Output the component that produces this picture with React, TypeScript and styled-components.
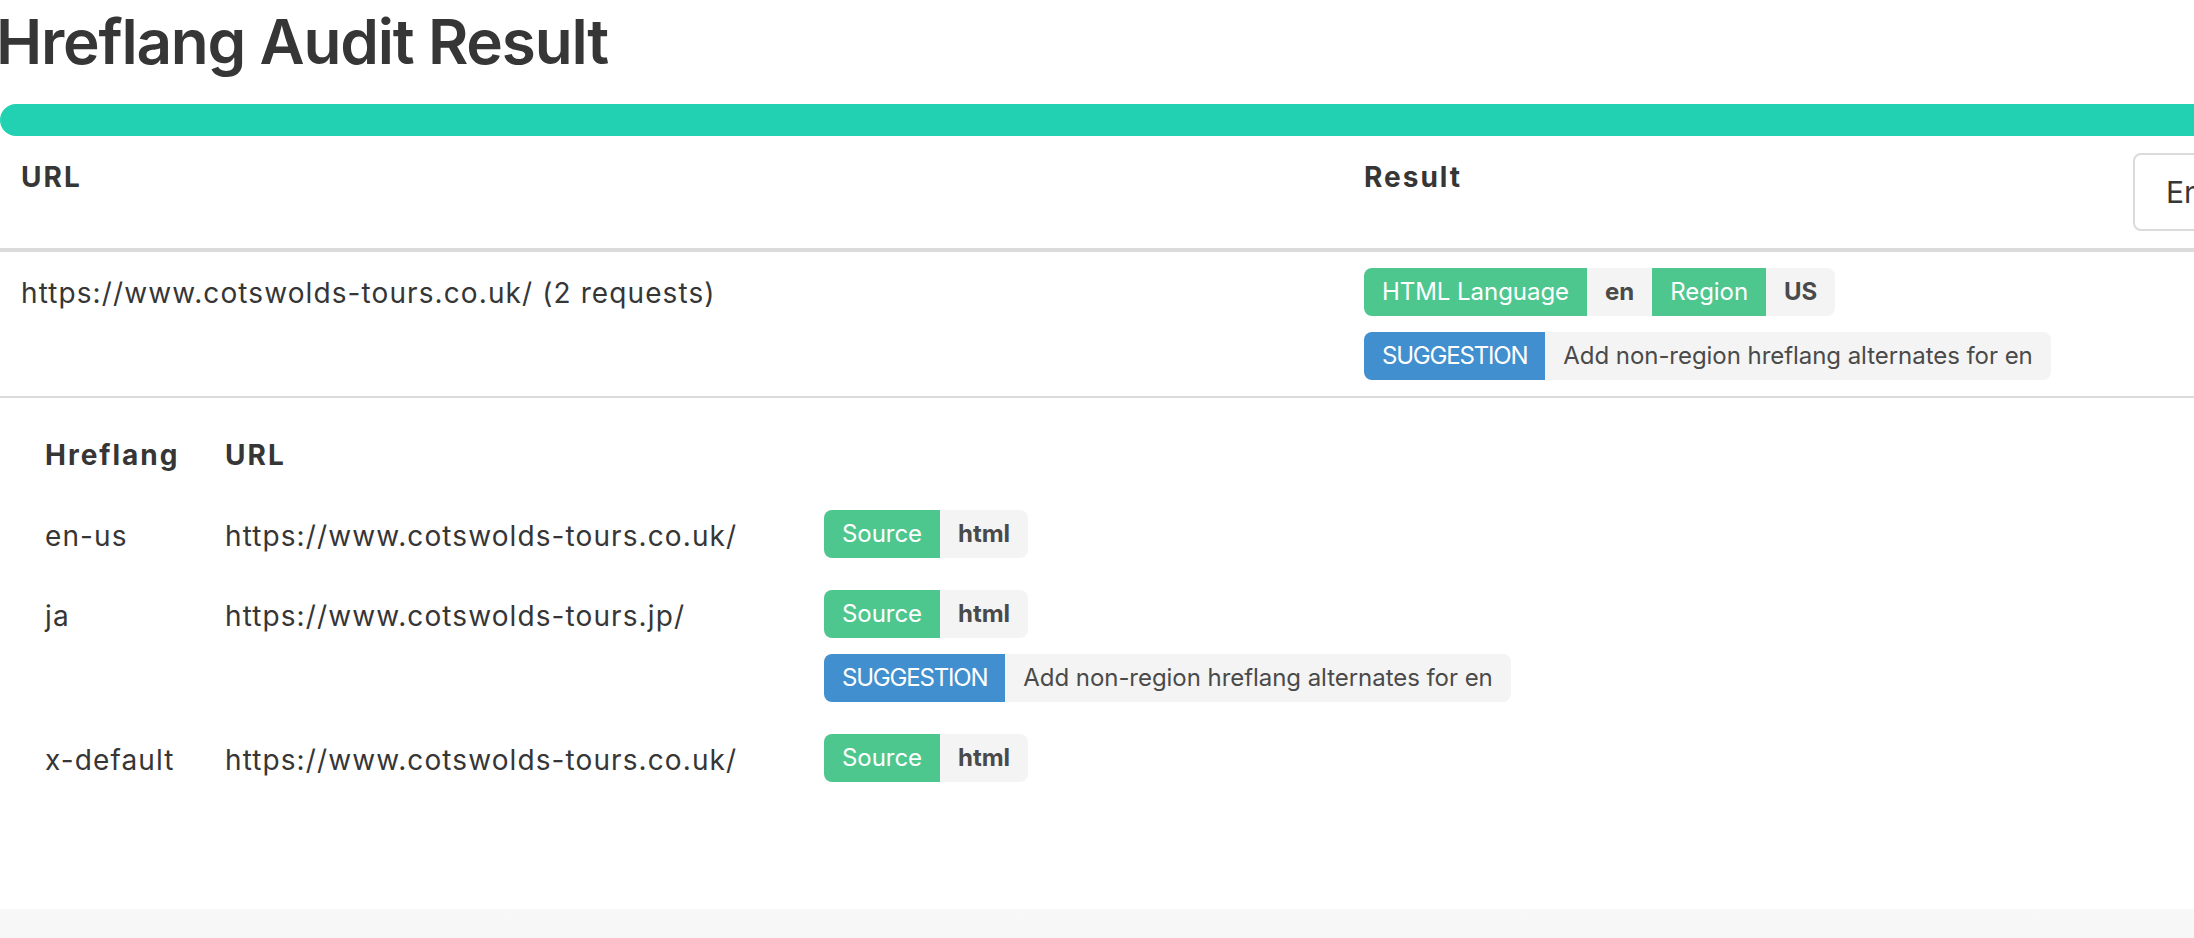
import React from "react";
import styled, { createGlobalStyle } from "styled-components";

type Tone = "success" | "info" | "light";

interface TagPart {
  text: string;
  tone: Tone;
  bold?: boolean;
}

interface HreflangRow {
  lang: string;
  url: string;
  suggestions: string[];
}

const SUGGESTION = "Add non-region hreflang alternates for en";

const hreflangs: HreflangRow[] = [
  { lang: "en-us", url: "https://www.cotswolds-tours.co.uk/", suggestions: [] },
  { lang: "ja", url: "https://www.cotswolds-tours.jp/", suggestions: [SUGGESTION] },
  { lang: "x-default", url: "https://www.cotswolds-tours.co.uk/", suggestions: [] },
];

const toneBg: Record<Tone, string> = {
  success: "#4ec78f",
  info: "#418fce",
  light: "#f4f4f4",
};

const GlobalStyle = createGlobalStyle`
  html, body {
    margin: 0;
    padding: 0;
    background: #fff;
    overflow: hidden;
  }
  body {
    font-family: Inter, "Noto Sans", sans-serif;
    color: #363636;
  }
`;

export default function App() {
  return (
    <>
      <GlobalStyle />
      <Page>
        <Title>Hreflang Audit Result</Title>
        <Progress />
        <Table>
          <colgroup>
            <col style={{ width: 1343 }} />
            <col style={{ width: 769 }} />
            <col />
          </colgroup>
          <thead>
            <tr>
              <HeadCell>URL</HeadCell>
              <HeadCell>Result</HeadCell>
              <ActionCell>
                <Button>Enter</Button>
              </ActionCell>
            </tr>
          </thead>
          <tbody>
            <tr>
              <UrlCell>https://www.cotswolds-tours.co.uk/ (2 requests)</UrlCell>
              <Cell colSpan={2}>
                <TagStack>
                  <Addons
                    parts={[
                      { text: "HTML Language", tone: "success" },
                      { text: "en", tone: "light", bold: true },
                      { text: "Region", tone: "success" },
                      { text: "US", tone: "light", bold: true },
                    ]}
                  />
                  <Addons
                    parts={[
                      { text: "SUGGESTION", tone: "info" },
                      { text: SUGGESTION, tone: "light" },
                    ]}
                  />
                </TagStack>
              </Cell>
            </tr>
            <tr>
              <DetailCell colSpan={3}>
                <SubGrid>
                  <SubHead>Hreflang</SubHead>
                  <SubHead>URL</SubHead>
                  <SubHead />
                  {hreflangs.map((row) => (
                    <React.Fragment key={row.lang}>
                      <SubText>{row.lang}</SubText>
                      <SubText>{row.url}</SubText>
                      <SubTags>
                        <TagStack>
                          <Addons
                            parts={[
                              { text: "Source", tone: "success" },
                              { text: "html", tone: "light", bold: true },
                            ]}
                          />
                          {row.suggestions.map((s) => (
                            <Addons
                              key={s}
                              parts={[
                                { text: "SUGGESTION", tone: "info" },
                                { text: s, tone: "light" },
                              ]}
                            />
                          ))}
                        </TagStack>
                      </SubTags>
                    </React.Fragment>
                  ))}
                </SubGrid>
              </DetailCell>
            </tr>
          </tbody>
        </Table>
        <Footer />
      </Page>
    </>
  );
}

function Addons({ parts }: { parts: TagPart[] }) {
  return (
    <AddonGroup>
      {parts.map((p, i) => (
        <Tag key={i} $tone={p.tone} $bold={p.bold} $caps={p.text === p.text.toUpperCase() && p.text.length > 3}>
          {p.text}
        </Tag>
      ))}
    </AddonGroup>
  );
}

const Page = styled.div`
  width: 2300px;
`;

const Title = styled.h1`
  margin: 0 0 27px -4px;
  padding-top: 6px;
  font-size: 62px;
  line-height: 71px;
  font-weight: 600;
  letter-spacing: -1.2px;
  color: #363636;
`;

const Progress = styled.div`
  height: 32px;
  border-radius: 16px;
  background: #22d1b2;
`;

const Table = styled.table`
  width: 100%;
  border-collapse: collapse;
  table-layout: fixed;
  font-size: 28px;
  line-height: 42px;
  letter-spacing: 1.1px;
  color: #363636;
`;

const HeadCell = styled.th`
  text-align: left;
  vertical-align: top;
  padding: 20px 21px 0;
  font-weight: 700;
  letter-spacing: 2px;
  border-bottom: 4px solid #dbdbdb;
`;

const ActionCell = styled.th`
  text-align: left;
  vertical-align: top;
  padding: 17px 21px;
  border-bottom: 4px solid #dbdbdb;
`;

const Button = styled.button`
  height: 78px;
  padding: 0 31px;
  border: 2px solid #dbdbdb;
  border-radius: 8px;
  background: #fff;
  font-family: Inter, "Noto Sans", sans-serif;
  font-size: 30px;
  letter-spacing: 0;
  color: #363636;
  white-space: nowrap;
`;

const Cell = styled.td`
  vertical-align: top;
  padding: 16px 21px;
  border-bottom: 2px solid #dbdbdb;
`;

const UrlCell = styled(Cell)`
  padding-top: 20px;
`;

const DetailCell = styled.td`
  padding: 36px 0 111px 45px;
`;

const TagStack = styled.div`
  display: flex;
  flex-direction: column;
  align-items: flex-start;
  gap: 16px;
`;

const AddonGroup = styled.div`
  display: inline-flex;
`;

const Tag = styled.span<{ $tone: Tone; $bold?: boolean; $caps?: boolean }>`
  display: inline-flex;
  align-items: center;
  height: 48px;
  padding: 0 18px;
  font-size: 24px;
  line-height: 1;
  white-space: nowrap;
  letter-spacing: ${(p) => (p.$caps ? "-1.2px" : "-0.05px")};
  background: ${(p) => toneBg[p.$tone]};
  color: ${(p) => (p.$tone === "light" ? "#4a4a4a" : "#fff")};
  font-weight: ${(p) => (p.$bold ? 700 : 400)};
  &:first-child {
    border-radius: 8px 0 0 8px;
  }
  &:last-child {
    border-radius: 0 8px 8px 0;
  }
`;

const SubGrid = styled.div`
  display: grid;
  grid-template-columns: 180px 599px 1fr;
`;

const SubHead = styled.div`
  padding-bottom: 18px;
  font-weight: 700;
  letter-spacing: 2px;
`;

const SubText = styled.div`
  padding: 21px 0 16px;
`;

const SubTags = styled.div`
  padding: 16px 0;
`;

const Footer = styled.div`
  height: 60px;
  background: linear-gradient(#f8f8f8, #f4f4f4);
`;
